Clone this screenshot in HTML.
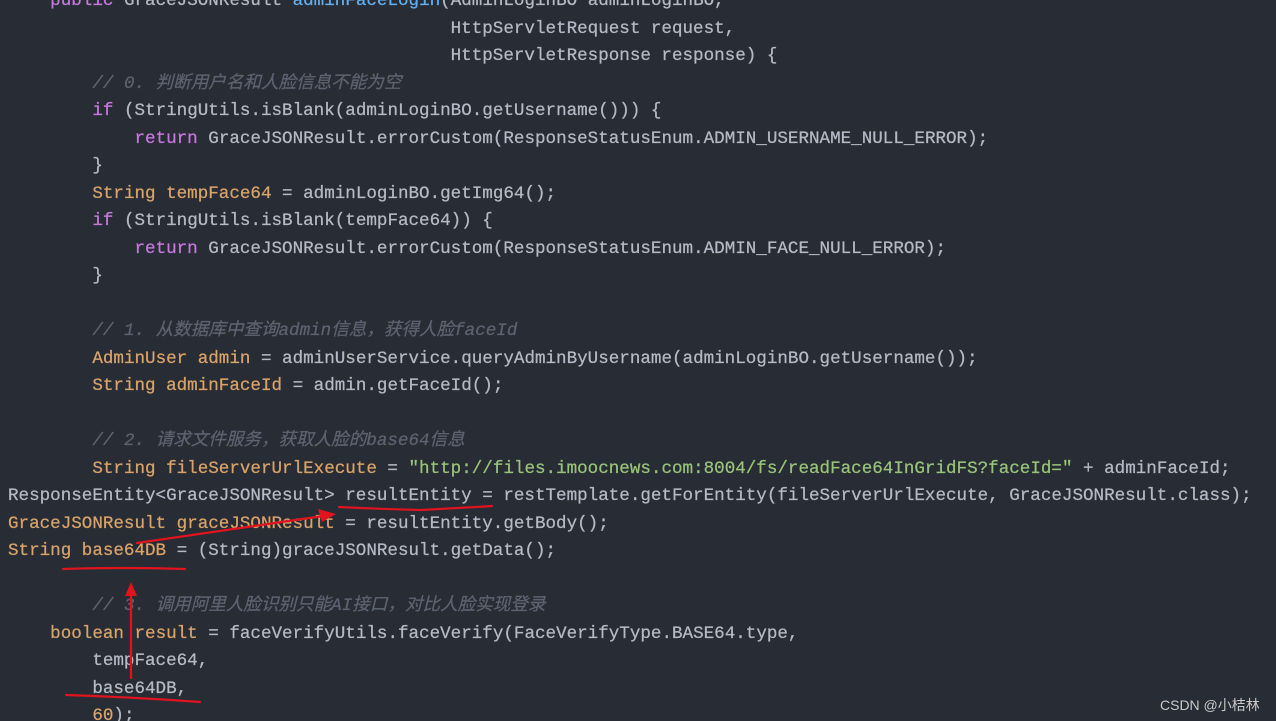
<!DOCTYPE html>
<html><head><meta charset="utf-8"><style>
html,body{margin:0;padding:0;background:#282c34;width:1276px;height:721px;overflow:hidden;position:relative}
pre{position:absolute;left:8px;top:-12px;margin:0;font-family:"Liberation Mono","Noto Sans CJK SC",monospace;font-size:17.57px;line-height:27.5px;color:#b4bac5;white-space:pre;-webkit-text-stroke:0.25px}
.k{color:#c678dd}.t{color:#d8a36a}.c{color:#5c6370;font-style:italic}.s{color:#98c379}.f{color:#61afef}
.wm{position:absolute;left:1160px;top:695px;font-family:"Liberation Sans","Noto Sans CJK SC",sans-serif;font-size:14px;color:#c8c8c8}
svg{position:absolute;left:0;top:0}
</style></head><body>
<pre>    <span class="k">public</span> GraceJSONResult <span class="f">adminFaceLogin</span>(AdminLoginBO adminLoginBO,
                                          HttpServletRequest request,
                                          HttpServletResponse response) {
        <span class="c">// 0. 判断用户名和人脸信息不能为空</span>
        <span class="k">if</span> (StringUtils.isBlank(adminLoginBO.getUsername())) {
            <span class="k">return</span> GraceJSONResult.errorCustom(ResponseStatusEnum.ADMIN_USERNAME_NULL_ERROR);
        }
        <span class="t">String tempFace64</span> = adminLoginBO.getImg64();
        <span class="k">if</span> (StringUtils.isBlank(tempFace64)) {
            <span class="k">return</span> GraceJSONResult.errorCustom(ResponseStatusEnum.ADMIN_FACE_NULL_ERROR);
        }

        <span class="c">// 1. 从数据库中查询admin信息，获得人脸faceId</span>
        <span class="t">AdminUser admin</span> = adminUserService.queryAdminByUsername(adminLoginBO.getUsername());
        <span class="t">String adminFaceId</span> = admin.getFaceId();

        <span class="c">// 2. 请求文件服务，获取人脸的base64信息</span>
        <span class="t">String fileServerUrlExecute</span> = <span class="s">"http://files.imoocnews.com:8004/fs/readFace64InGridFS?faceId="</span> + adminFaceId;
ResponseEntity&lt;GraceJSONResult&gt; resultEntity = restTemplate.getForEntity(fileServerUrlExecute, GraceJSONResult.class);
<span class="t">GraceJSONResult graceJSONResult</span> = resultEntity.getBody();
<span class="t">String base64DB</span> = (String)graceJSONResult.getData();

        <span class="c">// 3. 调用阿里人脸识别只能AI接口，对比人脸实现登录</span>
    <span class="t">boolean result</span> = faceVerifyUtils.faceVerify(FaceVerifyType.BASE64.type,
        tempFace64,
        base64DB,
        <span class="t">60</span>);</pre>
<svg width="1276" height="721">
<g stroke="#e0141e" stroke-width="2.2" fill="none" stroke-linecap="round">
<path d="M339 507 Q380 509 420 510 Q460 508 492 506"/>
<path d="M137 543 L330 515"/>
<path d="M63 569 Q120 567 185 569"/>
<path d="M131 678 L131 590"/>
<path d="M66 695 Q130 697 200 702"/>
</g>
<g fill="#e0141e">
<path d="M336 514 L318 509 L322 522 Z"/>
<path d="M131 582 L125 596 L137 596 Z"/>
</g>
</svg>
<div class="wm">CSDN @小桔林</div>
</body></html>
